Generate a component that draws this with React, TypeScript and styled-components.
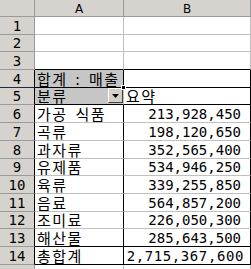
import { Fragment } from "react";
import styled, { createGlobalStyle } from "styled-components";

const GRID = "#c0c0c0";
const HEAD_LINE = "#9a9a9a";
const BLACK = "#000";

const GlobalStyle = createGlobalStyle`
  html, body {
    margin: 0;
    padding: 0;
    background: #fff;
  }
  body {
    width: 251px;
    height: 269px;
    overflow: hidden;
  }
`;

const Sheet = styled.div`
  display: grid;
  grid-template-columns: 35px 89px 127px;
  grid-template-rows: 17px repeat(15, 17.7px);
  width: 251px;
  height: 269px;
  overflow: hidden;
  font-family: "DejaVu Sans Mono", "Noto Sans CJK KR", monospace;
  color: #000;
`;

const ColHead = styled.div`
  box-sizing: border-box;
  background: #d6d3ce;
  border-right: 1px solid ${HEAD_LINE};
  border-bottom: 1px solid ${HEAD_LINE};
  display: flex;
  align-items: center;
  justify-content: center;
  font-family: "DejaVu Sans", sans-serif;
  font-size: 12px;
  padding-top: 1px;
`;

const RowHead = styled.div<{ $right?: string; $bottom?: string }>`
  box-sizing: border-box;
  background: #d6d3ce;
  border-right: 1px solid ${(p) => p.$right || HEAD_LINE};
  border-bottom: 1px solid ${(p) => p.$bottom || HEAD_LINE};
  display: flex;
  align-items: flex-end;
  justify-content: center;
  font-size: 14px;
  line-height: 16px;
`;

const Cell = styled.div<{
  $fill?: boolean;
  $right?: string;
  $bottom?: string;
  $end?: boolean;
  $pad?: number;
}>`
  position: relative;
  box-sizing: border-box;
  background: ${(p) => (p.$fill ? "#c6c6c6" : "#fff")};
  border-right: 1px solid ${(p) => p.$right || GRID};
  border-bottom: 1px solid ${(p) => p.$bottom || GRID};
  display: flex;
  align-items: flex-end;
  justify-content: ${(p) => (p.$end ? "flex-end" : "space-between")};
  padding: 0 ${(p) => (p.$end ? p.$pad ?? 9 : 0)}px 0 ${(p) => (p.$end ? 0 : 2)}px;
  white-space: nowrap;
`;

const Label = styled.span`
  font-family: "Noto Sans CJK KR", sans-serif;
  font-size: 15px;
  line-height: 16px;
  height: 16px;
  letter-spacing: 1.5px;
  word-spacing: 3px;
`;

const Amount = styled.span<{ $wide?: boolean }>`
  font-family: "DejaVu Sans Mono", monospace;
  font-size: 14px;
  line-height: 16px;
  height: 16px;
  letter-spacing: ${(p) => (p.$wide ? "0.6px" : "0")};
`;

const DropButton = styled.span`
  box-sizing: border-box;
  width: 15px;
  height: 15px;
  margin-bottom: 1px;
  background: #d4d0c8;
  border: 1px solid;
  border-color: #fff #404040 #404040 #fff;
  display: flex;
  align-items: center;
  justify-content: center;
`;

const FillHandle = styled.span`
  position: absolute;
  right: -3px;
  bottom: -3px;
  width: 3px;
  height: 3px;
  background: #000;
  border: 1px solid #fff;
  z-index: 2;
`;

const rows = [
  ["가공 식품", "213,928,450"],
  ["곡류", "198,120,650"],
  ["과자류", "352,565,400"],
  ["유제품", "534,946,250"],
  ["육류", "339,255,850"],
  ["음료", "564,857,200"],
  ["조미료", "226,050,300"],
  ["해산물", "285,643,500"],
];

export default function App() {
  return (
    <>
      <GlobalStyle />
      <Sheet>
        <ColHead />
        <ColHead>A</ColHead>
        <ColHead>B</ColHead>

        {[1, 2].map((n) => (
          <Fragment key={n}>
            <RowHead>{n}</RowHead>
            <Cell />
            <Cell />
          </Fragment>
        ))}

        <RowHead>3</RowHead>
        <Cell $bottom={BLACK} />
        <Cell $bottom={BLACK} />

        <RowHead $right={BLACK} $bottom="#1c2a48">4</RowHead>
        <Cell $fill $right={BLACK} $bottom={BLACK}>
          <Label>합계 : 매출</Label>
          <FillHandle />
        </Cell>
        <Cell $right={BLACK} $bottom={BLACK} />

        <RowHead $right={BLACK}>5</RowHead>
        <Cell $fill $bottom={BLACK}>
          <Label>분류</Label>
          <DropButton>
            <svg width="7" height="4" viewBox="0 0 7 4">
              <polygon points="0,0 7,0 3.5,4" fill="#000" />
            </svg>
          </DropButton>
        </Cell>
        <Cell $right={BLACK} $bottom={BLACK}>
          <Label>요약</Label>
        </Cell>

        {rows.map(([name, value], i) => {
          const last = i === rows.length - 1;
          return (
            <Fragment key={name}>
              <RowHead $right={BLACK}>{i + 6}</RowHead>
              <Cell $right={BLACK} $bottom={last ? BLACK : GRID}>
                <Label>{name}</Label>
              </Cell>
              <Cell $end $right={BLACK} $bottom={last ? BLACK : GRID}>
                <Amount>{value}</Amount>
              </Cell>
            </Fragment>
          );
        })}

        <RowHead $right={BLACK}>14</RowHead>
        <Cell $right={BLACK} $bottom={BLACK}>
          <Label>총합계</Label>
        </Cell>
        <Cell $end $pad={6} $right={BLACK} $bottom={BLACK}>
          <Amount $wide>2,715,367,600</Amount>
        </Cell>

        <RowHead />
        <Cell />
        <Cell />
      </Sheet>
    </>
  );
}
